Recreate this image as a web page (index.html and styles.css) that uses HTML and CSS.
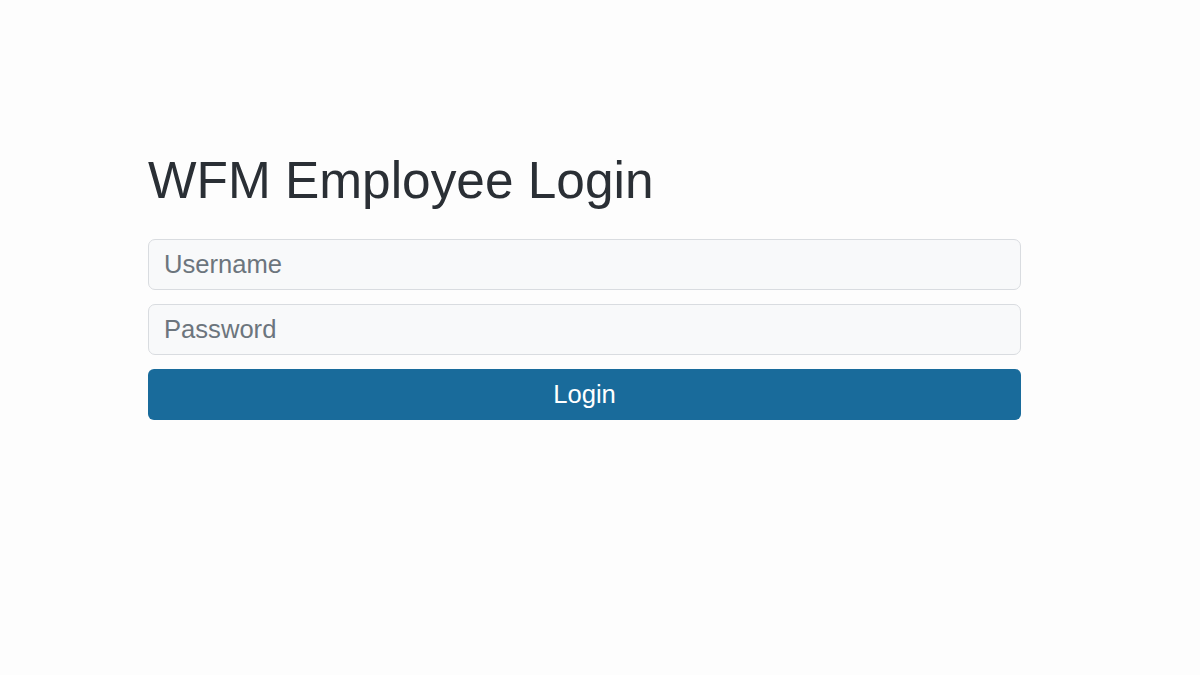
FILE: index.html
```html
<!DOCTYPE html>
<html lang="en">
<head>
<meta charset="utf-8">
<title>WFM Employee Login</title>
<link rel="stylesheet" href="styles.css">
</head>
<body>
<main class="page">
  <form class="login">
    <h1 class="login-title">WFM Employee Login</h1>
    <input class="field" type="text" placeholder="Username">
    <input class="field" type="password" placeholder="Password">
    <button class="btn" type="button">Login</button>
  </form>
</main>
</body>
</html>
```
FILE: styles.css
```css
* { box-sizing: border-box; }
html, body {
  margin: 0;
  height: 100%;
  background: #fdfdfd;
  font-family: "Liberation Sans", Arial, sans-serif;
}
.page {
  padding: 0 0 0 148px;
}
.login {
  width: 873px;
  padding-top: 150px;
  display: flex;
  flex-direction: column;
  gap: 14px;
}
.login-title {
  margin: 0 0 13px 0;
  font-size: 51.4px;
  font-weight: 400;
  line-height: 1.2;
  color: #2a2f35;
}
.field {
  height: 51px;
  width: 100%;
  padding: 0 15px;
  border: 1px solid #d9dce0;
  border-radius: 7px;
  background: #f8f9fa;
  font-family: inherit;
  font-size: 25.6px;
  color: #212529;
  outline: none;
}
.field::placeholder { color: #6c757d; opacity: 1; }
.btn {
  height: 51px;
  width: 100%;
  border: none;
  border-radius: 6px;
  background: #196b9b;
  color: #ffffff;
  font-family: inherit;
  font-size: 25.6px;
  cursor: pointer;
}
```
